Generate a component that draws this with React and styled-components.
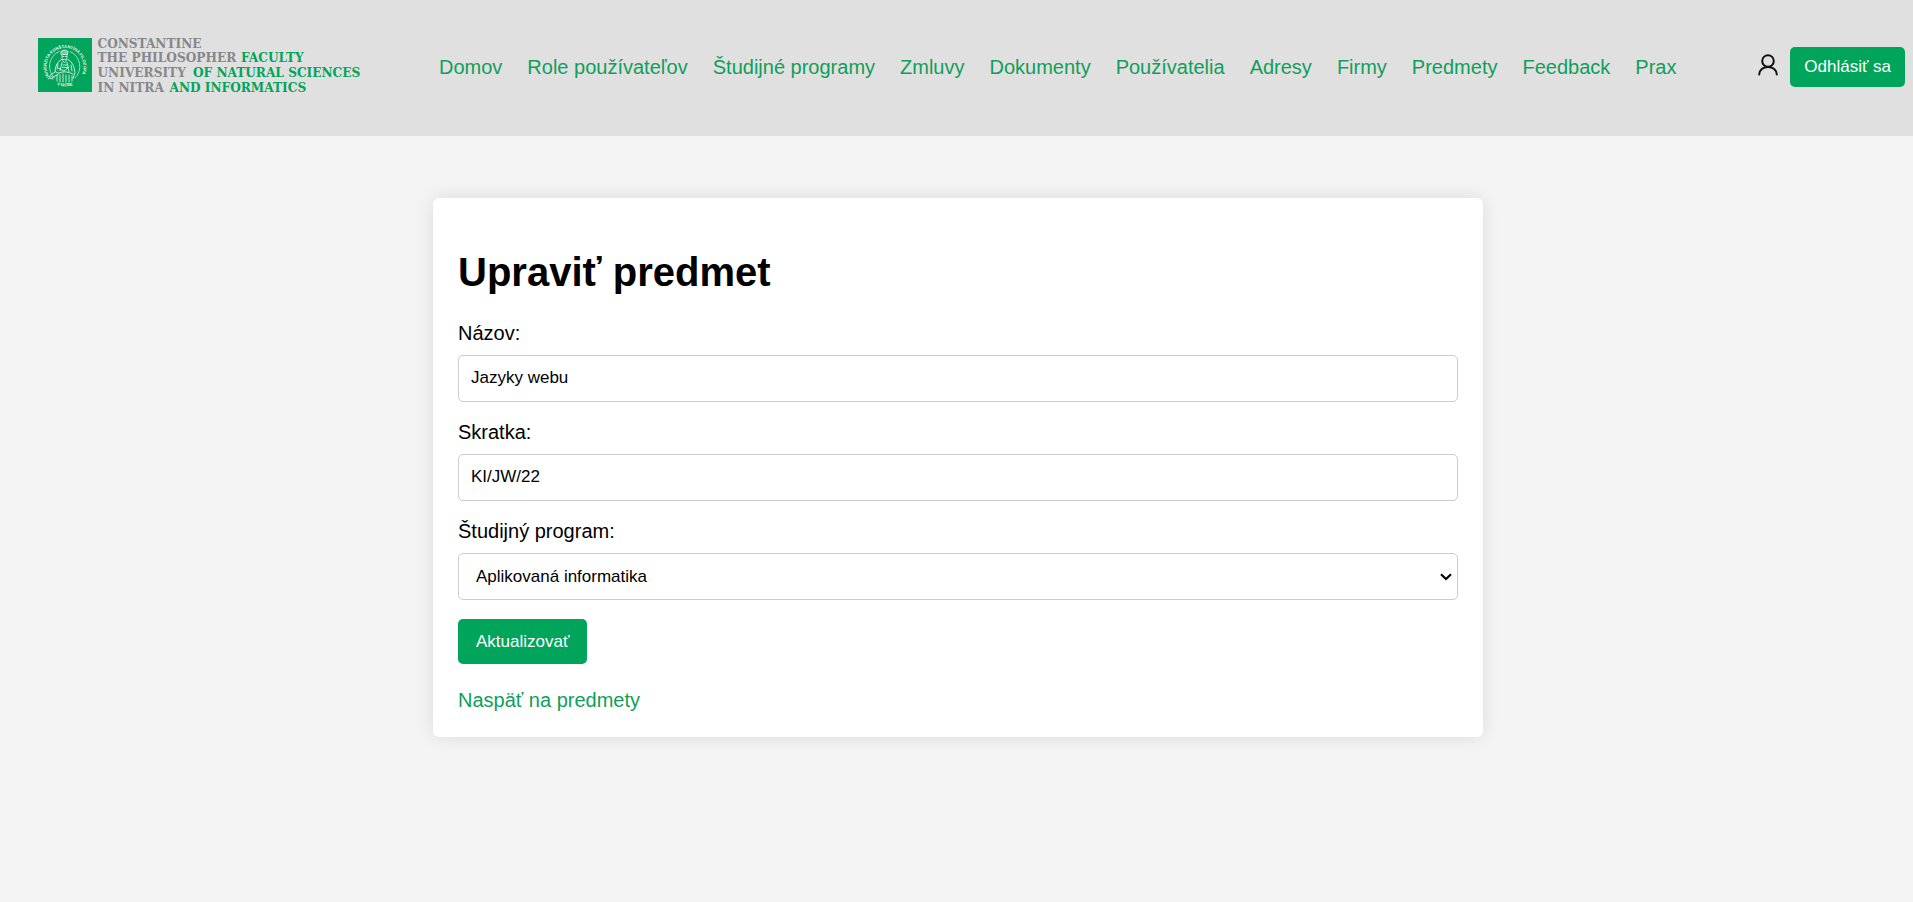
import React, { useState } from "react";
import styled, { createGlobalStyle } from "styled-components";

const GREEN = "#00a45a";

const GlobalStyle = createGlobalStyle`
  *, *::before, *::after { box-sizing: border-box; }
  body {
    margin: 0;
    background: #f4f4f4;
    color: #000;
    font-family: "Liberation Sans", Arial, sans-serif;
    font-size: 20px;
    line-height: 23px;
  }
`;

const Header = styled.header`
  display: flex;
  align-items: center;
  min-height: 136px;
  padding: 0 8px 2px 38px;
  background: #e0e0e0;
`;

const LogoLink = styled.a`
  flex: none;
  display: block;
  width: 401px;
  svg { display: block; }
`;

const Nav = styled.nav`
  display: flex;
  gap: 25px;
`;

const TextLink = styled.a`
  color: #109e5b;
  text-decoration: none;
  white-space: nowrap;
`;

const Actions = styled.div`
  display: flex;
  align-items: center;
  gap: 10px;
  margin-left: auto;
  svg { display: block; }
`;

const Button = styled.button`
  padding: ${(p) => (p.$large ? "13px 18px" : "10px 14px")};
  border: 0;
  border-radius: 5px;
  background: ${GREEN};
  color: #fff;
  font: 17px/${(p) => (p.$large ? "19px" : "20px")} "Liberation Sans", Arial, sans-serif;
  white-space: nowrap;
  cursor: pointer;
`;

const Main = styled.main`
  display: flex;
  justify-content: center;
  padding: 62px 20px 40px 23px;
`;

const Card = styled.section`
  width: 100%;
  max-width: 1050px;
  padding: 25px;
  border-radius: 6px;
  background: #fff;
  box-shadow: 0 0 20px rgba(0, 0, 0, 0.1);
`;

const Title = styled.h1`
  margin: 27px 0;
  font-size: 40px;
  line-height: 45px;
`;

const Form = styled.form`
  display: flex;
  flex-direction: column;
  align-items: flex-start;
  gap: 19px;
  margin-bottom: 25px;
`;

const Field = styled.div`
  display: flex;
  flex-direction: column;
  gap: 10px;
  width: 100%;
`;

const control = `
  width: 100%;
  height: 47px;
  border: 1px solid #ccc;
  border-radius: 5px;
  background: #fff;
  color: #000;
  font: 17px "Liberation Sans", Arial, sans-serif;
`;

const Input = styled.input`
  ${control}
  padding: 12px 12px 14px;
`;

const Select = styled.select`
  ${control}
  appearance: none;
  padding: 0 24px 0 17px;
`;

const SelectBox = styled.div`
  position: relative;
  svg {
    position: absolute;
    top: 20px;
    right: 6px;
    pointer-events: none;
  }
`;

const pages = [
  "Domov",
  "Role používateľov",
  "Študijné programy",
  "Zmluvy",
  "Dokumenty",
  "Používatelia",
  "Adresy",
  "Firmy",
  "Predmety",
  "Feedback",
  "Prax",
];

function Seal() {
  return (
    <svg x="0" y="2" width="108" height="108" viewBox="0 0 54 54">
      <rect width="54" height="54" fill={GREEN} />
      <defs>
        <path id="seal-top" d="M12.500 40 A18.500 18.500 0 1 1 41.500 40" />
        <path id="seal-bottom" d="M16 45.500 A21.500 21.500 0 0 0 38 45.500" />
      </defs>
      <text fill="#e6f7ee" fontFamily="Liberation Sans, sans-serif" fontSize="4.200" fontWeight="700">
        <textPath href="#seal-top">UNIVERZITA KONŠTANTÍNA FILOZOFA</textPath>
        <textPath href="#seal-bottom" startOffset="3">V NITRE</textPath>
      </text>
      <g fill="none" stroke="#d9f2e5" strokeWidth="0.9" strokeLinecap="round">
        <path d="M16.500 40 A16 16 0 0 1 21 13.500 M32 13.500 A16 16 0 0 1 37 40" strokeWidth="0.700" />
        <path d="M23 13.500 q3.500 -3 7 0 l-.6 3 h-5.800z" fill="#d9f2e5" fillOpacity="0.5" />
        <path d="M24 16.500 q-.5 7 2.500 8 q3 -1 2.500 -8 M25 18.500h1 M27.500 18.500h1 M25.500 21.500h2" />
        <path d="M23.500 21.500 q-6 3 -6.500 12 l4 2 M30 21.500 q6 3 7 13 l-2 6 M24 24.500 l-2 8 M29 24.500 l2 9" />
        <path d="M17 34 l-5 3.500 l2 2 l6 -3 M12 40 l3 1 M20 30 l6 3 l5 -4 M21 35 q6 -3 14 1 M19 37 v6 M22 37 v7 M25 36 v8 M28 37 v7 M31 37 v7 M34 38 v5" />
        <path d="M25 27 h4 M24.500 29.500 h5 M33 27 l1 6 M20 26 l-1 5" />
      </g>
    </svg>
  );
}

function Logo() {
  return (
    <svg width="330" height="70" viewBox="0 -10 660 140" role="img" aria-label="UKF Nitra">
      <Seal />
      <g fontFamily="DejaVu Serif Condensed, DejaVu Serif, serif" fontSize="27" fontWeight="700" fill="#85878a">
        <text x="119" y="21">CONSTANTINE</text>
        <text x="119" y="50">THE PHILOSOPHER</text>
        <text x="119" y="80">UNIVERSITY</text>
        <text x="119" y="109">IN NITRA</text>
        <g fill={GREEN}>
          <text x="406" y="50">FACULTY</text>
          <text x="310" y="80">OF NATURAL SCIENCES</text>
          <text x="263" y="109">AND INFORMATICS</text>
        </g>
      </g>
    </svg>
  );
}

function UserIcon() {
  return (
    <svg width="24" height="28" viewBox="0 0 24 28" fill="none" stroke="#111" strokeWidth="2" strokeLinecap="round" aria-hidden="true">
      <circle cx="12" cy="8" r="5.800" />
      <path d="M3.200 21.500 C3.400 17 7 13.900 12 13.900 S20.600 17 20.800 21.500" />
    </svg>
  );
}

function Chevron() {
  return (
    <svg width="12" height="8" viewBox="0 0 12 8" fill="none" stroke="#000" strokeWidth="2.200" aria-hidden="true">
      <path d="M1 1.300 L6 6 L11 1.300" />
    </svg>
  );
}

export default function App() {
  const [name, setName] = useState("Jazyky webu");
  const [code, setCode] = useState("KI/JW/22");

  return (
    <>
      <GlobalStyle />
      <Header>
        <LogoLink href="#"><Logo /></LogoLink>
        <Nav>
          {pages.map((page) => (
            <TextLink key={page} href="#">{page}</TextLink>
          ))}
        </Nav>
        <Actions>
          <UserIcon />
          <Button type="button">Odhlásiť sa</Button>
        </Actions>
      </Header>
      <Main>
        <Card>
          <Title>Upraviť predmet</Title>
          <Form onSubmit={(e) => e.preventDefault()}>
            <Field>
              <label htmlFor="name">Názov:</label>
              <Input id="name" type="text" value={name} onChange={(e) => setName(e.target.value)} />
            </Field>
            <Field>
              <label htmlFor="code">Skratka:</label>
              <Input id="code" type="text" value={code} onChange={(e) => setCode(e.target.value)} />
            </Field>
            <Field>
              <label htmlFor="program">Študijný program:</label>
              <SelectBox>
                <Select id="program" defaultValue="ai">
                  <option value="ai">Aplikovaná informatika</option>
                </Select>
                <Chevron />
              </SelectBox>
            </Field>
            <Button type="submit" $large>Aktualizovať</Button>
          </Form>
          <TextLink href="#">Naspäť na predmety</TextLink>
        </Card>
      </Main>
    </>
  );
}
